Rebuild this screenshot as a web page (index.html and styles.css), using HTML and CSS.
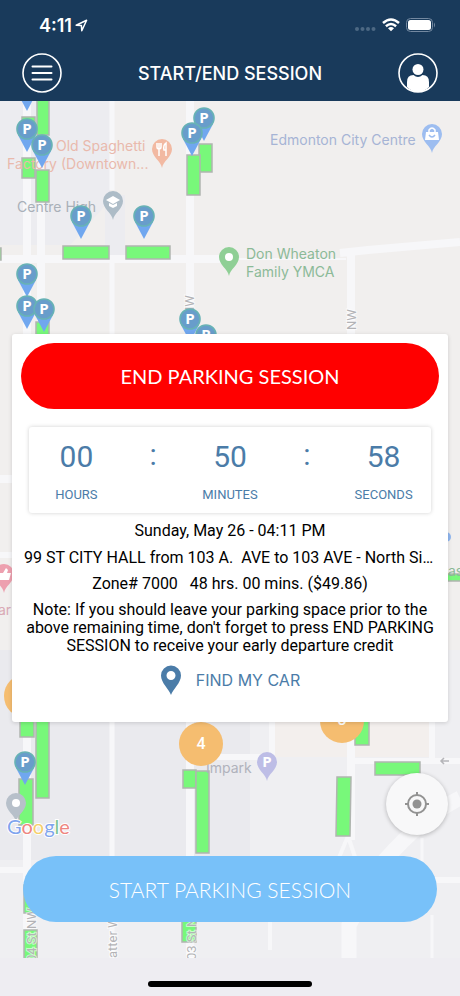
FILE: index.html
```html
<!DOCTYPE html>
<html lang="en">
<head>
    <meta charset="UTF-8">
    <meta name="viewport" content="width=device-width, initial-scale=1.0">
    <title>Start/End Session</title>
    <link rel="stylesheet" href="styles.css">
</head>
<body>
    <header>
        <div class="status">
            <div class="clock">
                <span>4:11</span>
                <svg width="13" height="13" viewBox="0 0 13 13"><path d="M1.2 6.2 L11.6 1.2 L6.8 11.8 L6.4 6.6 Z" fill="none" stroke="#fff" stroke-width="1.5" stroke-linejoin="round"/></svg>
            </div>
            <div class="signals">
                <svg width="22" height="14" viewBox="0 0 22 14" fill="#4d6883"><circle cx="3" cy="11" r="2"/><circle cx="8.500" cy="11" r="2"/><circle cx="14" cy="11" r="2"/><circle cx="19.500" cy="11" r="2"/></svg>
                <svg width="18" height="14" viewBox="0 0 18 14" fill="none" stroke="#fff" stroke-width="2.500"><path d="M1 5 Q9 -2 17 5"/><path d="M3.900 8.200 Q9 3.800 14.100 8.200"/><path d="M9 13.200 L6 10.200 Q9 7.800 12 10.200 Z" fill="#fff" stroke="none"/></svg>
                <svg width="30" height="14" viewBox="0 0 30 14"><rect x="0.500" y="0.500" width="26" height="13" rx="4" fill="none" stroke="#7388a0"/><rect x="2" y="2" width="23" height="10" rx="2.500" fill="#fff"/><path d="M28 4.500 Q30 7 28 9.500 Z" fill="#7388a0"/></svg>
            </div>
        </div>
        <div class="titlebar">
            <button class="icon-btn" aria-label="Menu">
                <svg width="40" height="40" viewBox="0 0 40 40" fill="none" stroke="#fff" stroke-width="1.600"><circle cx="20" cy="20" r="19"/><path d="M10.500 13.500 H29.500 M10.500 20 H29.500 M10.500 26.500 H29.500" stroke-width="2" stroke-linecap="round"/></svg>
            </button>
            <h1>START/END SESSION</h1>
            <button class="icon-btn" aria-label="Profile">
                <svg width="40" height="40" viewBox="0 0 40 40"><circle cx="20" cy="20" r="19" fill="none" stroke="#fff" stroke-width="1.600"/><circle cx="20" cy="16.500" r="5.500" fill="#fff"/><path d="M9 34 V29 Q9 22 15.500 22 Q20 26 24.500 22 Q31 22 31 29 V34 Q26 39 20 39 Q14 39 9 34 Z" fill="#fff"/></svg>
            </button>
        </div>
    </header>

    <main>
        <svg class="map" viewBox="0 101 460 857" preserveAspectRatio="xMidYMin slice" aria-hidden="true">
            <defs>
                <g id="parking">
                    <path d="M-9 6 L0 23 L9 6 Z" fill="#70a7ef"/>
                    <circle r="10" fill="#689dcb" stroke="#67b2b5" stroke-width="1.600"/>
                    <text class="pin-letter" y="5">P</text>
                </g>
                <path id="drop" d="M0 19 C-1 12 -10 8 -10 0 A10 10 0 1 1 10 0 C10 8 1 12 0 19 Z"/>
            </defs>

            <rect y="101" width="460" height="857" fill="#f1efee"/>
            <path d="M0 101 H110 V200 L70 245 H0 Z" fill="#ececf0"/>
            <rect x="105" y="195" width="20" height="60" fill="#ececf0"/>
            <path d="M0 650 H460 V958 H0 Z" fill="#efeff2"/>
            <path d="M0 650 H250 V860 H0 Z" fill="#eaeaee"/>
            <rect x="275" y="700" width="154" height="57" fill="#f3efed"/>

            <!-- streets -->
            <g fill="none" stroke="#f7f7f9" stroke-width="8">
                <path d="M27 101 V958 M41 101 V720" />
                <path d="M112 101 V190 M112 259 V958" stroke-width="5"/>
                <path d="M190 101 V958"/>
                <path d="M0 259 H230 M0 479 H20"/>
                <path d="M230 259 H346" stroke-width="2"/>
                <path d="M340 253 L368 250 L460 242 M351 252 V840"/>
                <path d="M355 761 H460 M272 700 V756 M432 700 V760" stroke-width="6"/>
                <path d="M200 757 H270 M0 870 H30 M430 880 H460 M0 555 H20" stroke-width="6"/>
                <path d="M348 836 L338 860 M348 836 L356 860 M270 915 V950" stroke-width="4"/>
                <path d="M460 798 Q425 815 385 860 L349 925 V958" stroke-width="15"/>
                <path d="M422 838 V870 M432 915 V958" stroke-width="3"/>
            </g>

            <!-- parking zones -->
            <g class="zones">
                <rect x="37" y="95" width="12" height="40"/>
                <rect x="22" y="117" width="13" height="12"/>
                <rect x="22" y="158" width="13" height="20"/>
                <rect x="36" y="170" width="13" height="32"/>
                <rect x="199" y="144" width="13" height="28"/>
                <rect x="187" y="155" width="13" height="40"/>
                <rect x="63" y="246" width="46" height="13"/>
                <rect x="126" y="246" width="44" height="13"/>
                <rect x="-10" y="248" width="11" height="12"/>
                <rect x="36" y="322" width="13" height="20"/>
                <rect x="440" y="574" width="30" height="7"/>
                <rect x="20" y="710" width="14" height="27"/>
                <rect x="36" y="710" width="13" height="88"/>
                <rect x="19" y="779" width="14" height="46"/>
                <rect x="183" y="770" width="13" height="18"/>
                <rect x="196" y="771" width="13" height="82"/>
                <rect x="355" y="710" width="14" height="35"/>
                <rect x="375" y="762" width="45" height="13"/>
                <path d="M337 777 H351 L350 836 H336 Z"/>
                <rect x="24" y="885" width="13" height="28"/>
                <rect x="24" y="930" width="13" height="35"/>
                <rect x="182" y="915" width="14" height="27"/>
            </g>

            <!-- places -->
            <g class="places">
                <g fill="#e9b9ac">
                    <text x="56" y="151">Old Spaghetti</text>
                    <text x="7" y="169">Factory (Downtown...</text>
                </g>
                <text x="17" y="212" fill="#a9b0b8">Centre High</text>
                <text x="270" y="145" fill="#a6b4d5">Edmonton City Centre</text>
                <g fill="#8cba98">
                    <text x="246" y="259">Don Wheaton</text>
                    <text x="246" y="277">Family YMCA</text>
                </g>
                <text x="206" y="773" fill="#b0b2bc">Impark</text>
                <text x="-2" y="615" fill="#d9a9b5">ar</text>
                <text x="448" y="576" fill="#8cba98">as</text>
            </g>
            <use href="#drop" x="162" y="149" fill="#f2b9a2"/>
            <path d="M157 143 V147 Q157 149 159 149 T161 147 V143 M159 143 V156 M166 156 V143 Q163 145 164 150 H166" fill="none" stroke="#fff" stroke-width="1.500"/>
            <use href="#drop" x="113" y="201" fill="#adbcc7"/>
            <path d="M106 200 L113 196 L120 200 L113 204 Z M109 203 V206 L113 208 L117 206 V203 L113 205 Z" fill="#fff"/>
            <use href="#drop" x="432" y="134" fill="#9dbdf0"/>
            <path d="M426 132 H438 L439 140 H425 Z" fill="#fff"/>
            <path d="M429 133 V130 Q432 126 435 130 V133" fill="none" stroke="#fff" stroke-width="1.500"/>
            <path d="M429 135 Q432 139 435 135" fill="none" stroke="#9dbdf0" stroke-width="1.500"/>
            <use href="#drop" x="229" y="257" fill="#8fcf95"/>
            <circle cx="229" cy="257" r="4" fill="#fff"/>
            <use href="#drop" x="16" y="803" fill="#b7c0ca"/>
            <circle cx="16" cy="803" r="4" fill="#fff"/>
            <use href="#drop" x="267" y="762" fill="#bdbde6"/>
            <text class="pin-letter" x="267" y="767">P</text>
            <use href="#drop" x="4" y="574" fill="#eda0af"/>
            <path d="M-1 573 H3 L6 568 L8 570 L7 573 H11 L9 580 H-1 Z" fill="#fff"/>
            <circle cx="446" cy="537" r="5" fill="#8fb6f0"/>

            <g class="streets">
                <text transform="translate(194 316) rotate(-90)">NW</text>
                <text transform="translate(356 330) rotate(-90)">NW</text>
                <text transform="translate(36 962) rotate(-90)">04 St NW</text>
                <text transform="translate(117 958) rotate(-90)">atter Way</text>
                <text transform="translate(196 960) rotate(-90)">03 St NW</text>
            </g>
            <path d="M449 761 H441 M444 758 L441 761 L444 764" fill="none" stroke="#b5b5b9" stroke-width="1.500"/>

            <use href="#parking" x="27" y="88"/>
            <use href="#parking" x="27" y="129"/>
            <use href="#parking" x="42" y="145"/>
            <use href="#parking" x="204" y="118"/>
            <use href="#parking" x="192" y="133"/>
            <use href="#parking" x="81" y="216"/>
            <use href="#parking" x="144" y="216"/>
            <use href="#parking" x="27" y="274"/>
            <use href="#parking" x="27" y="306"/>
            <use href="#parking" x="44" y="309"/>
            <use href="#parking" x="190" y="319"/>
            <use href="#parking" x="206" y="335"/>
            <use href="#parking" x="25" y="762"/>

            <g class="clusters">
                <circle cx="26" cy="696" r="22"/>
                <circle cx="201" cy="744" r="22"/>
                <circle cx="342" cy="721" r="22"/>
                <text x="201" y="749">4</text>
                <text x="342" y="725">3</text>
            </g>

            <text class="google" x="7" y="834"><tspan fill="#7fa5ee">G</tspan><tspan fill="#ee8580">o</tspan><tspan fill="#f5cf6b">o</tspan><tspan fill="#7fa5ee">g</tspan><tspan fill="#7dc592">l</tspan><tspan fill="#ee8580">e</tspan></text>
        </svg>

        <section class="card">
            <button class="pill end">END PARKING SESSION</button>
            <div class="timer">
                <div class="unit"><span class="value">00</span><span class="label">HOURS</span></div>
                <div class="colon">:</div>
                <div class="unit"><span class="value">50</span><span class="label">MINUTES</span></div>
                <div class="colon">:</div>
                <div class="unit"><span class="value">58</span><span class="label">SECONDS</span></div>
            </div>
            <p class="date">Sunday, May 26 - 04:11 PM</p>
            <p class="address">99 ST CITY HALL from 103 A.&nbsp; AVE to 103 AVE - North Side</p>
            <p>Zone# 7000 &nbsp; 48 hrs. 00 mins. ($49.86)</p>
            <p>Note: If you should leave your parking space prior to the above remaining time, don't forget to press END PARKING SESSION to receive your early departure credit</p>
            <a class="find" href="#">
                <svg width="22" height="30" viewBox="0 0 22 30"><path d="M11 30 C9 24 1 18 1 10.500 A10 10 0 0 1 21 10.500 C21 18 13 24 11 30 Z M11 6 A4.500 4.500 0 1 0 11 15 A4.500 4.500 0 1 0 11 6 Z" fill="#4b7ca8" fill-rule="evenodd"/></svg>
                <span>FIND MY CAR</span>
            </a>
        </section>

        <button class="locate" aria-label="My location">
            <svg width="26" height="26" viewBox="0 0 26 26" fill="none" stroke="#929292" stroke-width="2"><circle cx="13" cy="13" r="9"/><circle cx="13" cy="13" r="4.500" fill="#929292" stroke="none"/><path d="M13 1 V5 M13 21 V25 M1 13 H5 M21 13 H25"/></svg>
        </button>
        <button class="pill start">START PARKING SESSION</button>
    </main>

    <footer><div class="home-bar"></div></footer>
</body>
</html>
```

FILE: styles.css
```css
* {
    margin: 0;
    padding: 0;
    box-sizing: border-box;
}

body {
    min-height: 100vh;
    display: flex;
    flex-direction: column;
    background: #eeedf2;
    font-family: Roboto, sans-serif;
}

button {
    border: none;
    background: none;
    cursor: pointer;
}

svg {
    display: block;
}

header {
    background: #193a5b;
    color: #fff;
    font-family: Inter, sans-serif;
    padding: 14px 22px 8px;
}

.status {
    display: flex;
    justify-content: space-between;
    align-items: center;
    height: 22px;
    padding: 0 2px 0 17px;
    font-size: 18px;
    font-weight: 600;
}

.clock {
    display: flex;
    align-items: center;
    gap: 3px;
}

.signals {
    display: flex;
    align-items: center;
    gap: 6px;
}

.titlebar {
    display: flex;
    justify-content: space-between;
    align-items: center;
    margin-top: 17px;
}

.titlebar h1 {
    font-size: 18px;
    font-weight: 500;
}

.icon-btn {
    width: 40px;
    height: 40px;
}

/* map */
main {
    position: relative;
    flex: 1;
    display: flex;
    flex-direction: column;
    padding: 233px 12px 36px;
    overflow: hidden;
}

.map {
    position: absolute;
    top: 0;
    left: 0;
    width: 100%;
    height: 100%;
}

.zones {
    fill: #78f87a;
    stroke: #b0b5b0;
    stroke-width: 1.5px;
}

.places {
    font-family: Inter, sans-serif;
    font-size: 14px;
}

.streets {
    font-size: 13px;
    fill: #b3b3b6;
    stroke: rgba(255, 255, 255, 0.6);
    stroke-width: 2px;
    paint-order: stroke;
}

.pin-letter {
    fill: #fff;
    font-family: "Open Sans", sans-serif;
    font-size: 15px;
    font-weight: 700;
    text-anchor: middle;
}

.clusters {
    fill: #f5bd70;
    font-size: 16px;
    font-weight: 500;
    text-anchor: middle;
}

.clusters text {
    fill: #fff;
}

.google {
    font-family: Lato, sans-serif;
    font-size: 20px;
    stroke: #fff;
    stroke-width: 2px;
    paint-order: stroke;
}

/* session card */
.card {
    position: relative;
    min-height: 388px;
    padding: 9px;
    background: #fff;
    border-radius: 3px;
    box-shadow: 0 1px 4px rgba(0, 0, 0, 0.15);
    font-size: 16px;
    line-height: 18px;
    text-align: center;
}

.pill {
    display: block;
    height: 66px;
    border-radius: 33px;
    color: #fff;
    font-family: Lato, sans-serif;
    font-size: 20px;
}

.end {
    width: 100%;
    background: #ff0000;
}

.timer {
    display: grid;
    grid-template-columns: repeat(5, 1fr);
    height: 86px;
    margin: 18px 8px 9px;
    padding: 12px 9px;
    border-radius: 3px;
    box-shadow: 0 0 4px rgba(0, 0, 0, 0.18);
    color: #4b7ca8;
}

.unit {
    display: flex;
    flex-direction: column;
    align-items: center;
}

.value {
    font-size: 30px;
    line-height: 36px;
}

.label {
    margin-top: 11px;
    font-size: 13px;
}

.colon {
    font-size: 30px;
    line-height: 32px;
}

.card p {
    margin: 0 3px 8px;
}

.card .date {
    margin-bottom: 9px;
}

.card .address {
    overflow: hidden;
    white-space: nowrap;
    text-overflow: ellipsis;
}

.find {
    display: inline-flex;
    align-items: center;
    gap: 14px;
    padding-top: 2px;
    color: #4b7ca8;
    font-family: Inter, sans-serif;
    text-decoration: none;
}

.locate {
    position: absolute;
    right: 12px;
    bottom: 123px;
    display: flex;
    align-items: center;
    justify-content: center;
    width: 62px;
    height: 62px;
    border-radius: 50%;
    background: #f8f8f9;
    box-shadow: 0 1px 4px rgba(0, 0, 0, 0.25);
}

.start {
    position: relative;
    margin: auto 11px 0;
    background: #78c1f9;
    font-size: 21px;
    font-weight: 300;
}

footer {
    display: flex;
    justify-content: center;
    height: 38px;
    padding-top: 23px;
}

.home-bar {
    width: 164px;
    height: 6px;
    border-radius: 3px;
    background: #000;
}
```
